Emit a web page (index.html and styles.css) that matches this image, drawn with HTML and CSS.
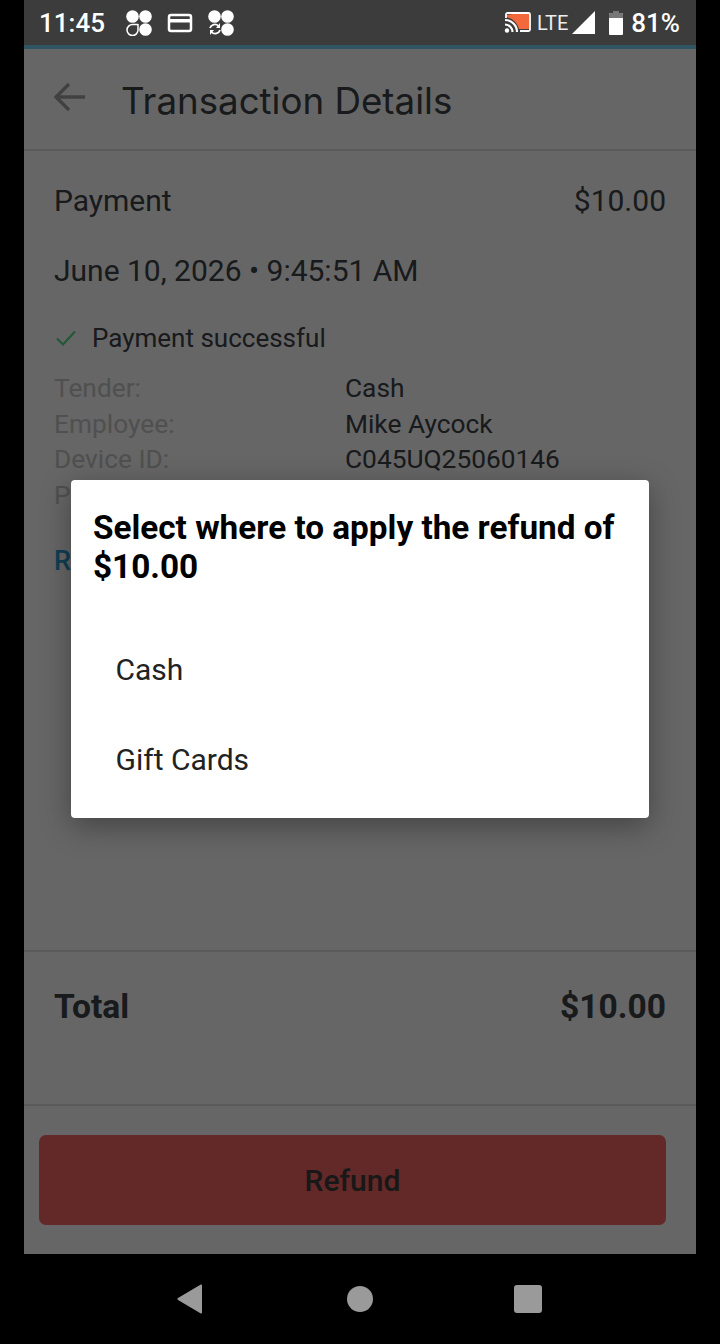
FILE: index.html
```html
<!DOCTYPE html>
<html lang="en">
<head>
    <meta charset="UTF-8">
    <meta name="viewport" content="width=device-width, initial-scale=1.0">
    <title>Transaction Details</title>
    <link rel="stylesheet" href="styles.css">
</head>
<body>
    <div class="phone">
        <div class="status-bar">
            <div class="status-left">
                <span class="clock">11:45</span>
                <svg class="note-icon" width="28" height="26" viewBox="0 0 28 26">
                    <circle cx="7.500" cy="6.500" r="6.300" fill="#fff"/>
                    <circle cx="20.500" cy="6.500" r="6.300" fill="#fff"/>
                    <circle cx="20.500" cy="19.500" r="6.300" fill="#fff"/>
                    <path d="M13 14v6a5.500 5.500 0 1 1-5.500-5.500H13" fill="none" stroke="#fff" stroke-width="1.500"/>
                </svg>
                <svg class="note-icon" width="26" height="22" viewBox="0 0 26 22">
                    <rect x="2" y="3" width="22" height="16" rx="2" fill="none" stroke="#fff" stroke-width="2.500"/>
                    <rect x="2" y="7" width="22" height="3.500" fill="#fff"/>
                </svg>
                <svg class="note-icon" width="28" height="26" viewBox="0 0 28 26">
                    <circle cx="7.500" cy="6.500" r="6.300" fill="#fff"/>
                    <circle cx="20.500" cy="6.500" r="6.300" fill="#fff"/>
                    <circle cx="20.500" cy="19.500" r="6.300" fill="#fff"/>
                    <path d="M3 18a5 5 0 0 1 8.500-2M13 20a5 5 0 0 1-8.500 2" fill="none" stroke="#fff" stroke-width="1.800"/>
                    <path d="M13 13v5h-4zM3 25v-5h4z" fill="#fff"/>
                </svg>
            </div>
            <div class="status-right">
                <svg width="28" height="22" viewBox="0 0 28 22">
                    <path d="M9 2h16v15H15C13 10 8 6 2 5V3" fill="#f26a3c"/>
                    <path d="M2 6V2.500A1.500 1.500 0 0 1 3.500 1h21A1.500 1.500 0 0 1 26 2.500v15a1.500 1.500 0 0 1-1.500 1.500H16" fill="none" stroke="#fff" stroke-width="1.800"/>
                    <path d="M1 8a12 12 0 0 1 12 12M1 12.500a7.500 7.500 0 0 1 7.500 7.500" fill="none" stroke="#fff" stroke-width="2.200"/>
                    <circle cx="3" cy="18.500" r="2.200" fill="#fff"/>
                </svg>
                <span class="lte">LTE</span>
                <svg class="signal" width="24" height="24" viewBox="0 0 24 24">
                    <path d="M0 23 23 0v23z" fill="#fff"/>
                </svg>
                <svg class="battery" width="14" height="24" viewBox="0 0 14 24">
                    <path d="M4 0h6v2h3a1 1 0 0 1 1 1v20a1 1 0 0 1-1 1H1a1 1 0 0 1-1-1V3a1 1 0 0 1 1-1h3z" fill="#fff"/>
                    <path d="M4 0h6v2h3a1 1 0 0 1 1 1v4H0V3a1 1 0 0 1 1-1h3z" fill="#777"/>
                </svg>
                <span class="percent">81%</span>
            </div>
        </div>

        <div class="screen">
            <header class="app-bar">
                <svg class="back" width="34" height="32" viewBox="0 0 34 32">
                    <path d="M32 16H4M16 3 3 16l13 13" fill="none" stroke="#a4a4a4" stroke-width="3.400"/>
                </svg>
                <h1>Transaction Details</h1>
            </header>

            <main class="details">
                <div class="row-between">
                    <span>Payment</span>
                    <span>$10.00</span>
                </div>
                <div class="date">June 10, 2026 • 9:45:51 AM</div>
                <div class="success">
                    <svg width="24" height="20" viewBox="0 0 24 20">
                        <path d="M3 10.500 9 16.500 21 3.500" fill="none" stroke="#55d98a" stroke-width="2.200"/>
                    </svg>
                    <span>Payment successful</span>
                </div>
                <div class="info-grid">
                    <span class="info-label">Tender:</span><span>Cash</span>
                    <span class="info-label">Employee:</span><span>Mike Aycock</span>
                    <span class="info-label">Device ID:</span><span>C045UQ25060146</span>
                    <span class="info-label">P</span><span></span>
                </div>
                <div class="link">R</div>
            </main>

            <section class="total">
                <span>Total</span>
                <span>$10.00</span>
            </section>

            <footer class="actions">
                <button class="refund">Refund</button>
            </footer>

            <div class="scrim">
                <div class="dialog">
                    <h2>Select where to apply the refund of $10.00</h2>
                    <div class="option">Cash</div>
                    <div class="option">Gift Cards</div>
                </div>
            </div>
        </div>
    </div>

    <nav class="nav-bar">
        <svg width="28" height="32" viewBox="0 0 28 32">
            <path d="M26 2.500v27a1 1 0 0 1-1.600.8L2 17a1.200 1.200 0 0 1 0-2L24.400 1.700A1 1 0 0 1 26 2.500z" fill="#9a9a9a"/>
        </svg>
        <span class="nav-circle"></span>
        <span class="nav-square"></span>
    </nav>
</body>
</html>
```

FILE: styles.css
```css
html, body {
    margin: 0;
    padding: 0;
    background: #000;
}
body {
    width: 720px;
    height: 1344px;
    overflow: hidden;
    font-family: Roboto, "Liberation Sans", sans-serif;
    color: #3c4248;
}
.phone {
    width: 672px;
    height: 1254px;
    margin: 0 24px;
    display: flex;
    flex-direction: column;
}

/* status bar */
.status-bar {
    height: 45px;
    flex: none;
    background: #3c3c3c;
    border-bottom: 4px solid #2e5561;
    color: #fff;
    display: flex;
    justify-content: space-between;
    align-items: center;
    padding: 0 16px 0 15px;
}
.status-left, .status-right {
    display: flex;
    align-items: center;
}
.clock {
    font-size: 26px;
    font-weight: 500;
    margin-right: 20px;
}
.note-icon {
    margin-right: 14px;
}
.lte {
    font-size: 20px;
    margin: 0 4px 0 5px;
    color: #eee;
}
.signal {
    margin-right: 13px;
}
.battery {
    margin-right: 8px;
}
.percent {
    font-size: 26px;
    font-weight: 500;
}

/* app content */
.screen {
    flex: 1;
    position: relative;
    background: #fff;
    display: flex;
    flex-direction: column;
}
.app-bar {
    height: 102px;
    flex: none;
    box-sizing: border-box;
    border-bottom: 2px solid #e0e0e0;
    display: flex;
    align-items: center;
    padding: 0 30px 0 29px;
    gap: 34px;
}
.back {
    margin-top: -4px;
}
.app-bar h1 {
    margin: 2px 0 0;
    font-family: Inter, Roboto, sans-serif;
    font-size: 36.700px;
    font-weight: 400;
}
.details {
    flex: 1;
    padding: 30px 30px 0;
    font-size: 30px;
}
.row-between {
    display: flex;
    justify-content: space-between;
    line-height: 40px;
}
.date {
    margin-top: 30px;
    line-height: 40px;
}
.success {
    margin-top: 27px;
    display: flex;
    align-items: center;
    gap: 14px;
    font-size: 26px;
    line-height: 40px;
}
.info-grid {
    margin-top: 13px;
    display: grid;
    grid-template-columns: 291px 1fr;
    grid-auto-rows: 35.500px;
    font-size: 26.300px;
    line-height: 35px;
}
.info-label {
    color: #c8c8c8;
}
.link {
    margin-top: 32px;
    font-size: 27px;
    font-weight: 500;
    color: #2a9bd0;
}
.total {
    height: 154px;
    flex: none;
    box-sizing: border-box;
    border-top: 2px solid #e0e0e0;
    padding: 0 30px 44px;
    display: flex;
    justify-content: space-between;
    align-items: center;
    font-size: 33.600px;
    font-weight: 700;
}
.actions {
    height: 150px;
    flex: none;
    box-sizing: border-box;
    border-top: 2px solid #e0e0e0;
    padding: 29px 30px 29px 15px;
}
.refund {
    display: block;
    width: 100%;
    height: 90px;
    border: none;
    border-radius: 7px;
    background: #f86464;
    color: #3c3c40;
    font-family: inherit;
    font-size: 30px;
    font-weight: 500;
}

/* dialog */
.scrim {
    position: absolute;
    inset: 0;
    background: rgba(0, 0, 0, 0.6);
    display: flex;
    justify-content: center;
    align-items: flex-start;
    padding-top: 431px;
}
.dialog {
    width: 578px;
    height: 338px;
    box-sizing: border-box;
    background: #fff;
    border-radius: 4px;
    box-shadow: 0 8px 30px rgba(0, 0, 0, 0.35);
    padding: 28px 22px 0;
    color: #000;
}
.dialog h2 {
    margin: 0 0 39px;
    font-size: 33.300px;
    font-weight: 700;
    line-height: 39px;
}
.option {
    height: 90px;
    line-height: 90px;
    padding-left: 22.500px;
    font-size: 30px;
    color: #222;
}

/* nav bar */
.nav-bar {
    height: 90px;
    display: flex;
    align-items: center;
    padding: 0 178px 0 176px;
    justify-content: space-between;
}
.nav-circle {
    width: 26px;
    height: 26px;
    margin-left: 2px;
    border-radius: 50%;
    background: #9a9a9a;
}
.nav-square {
    width: 28px;
    height: 28px;
    border-radius: 3px;
    background: #9a9a9a;
}
```
